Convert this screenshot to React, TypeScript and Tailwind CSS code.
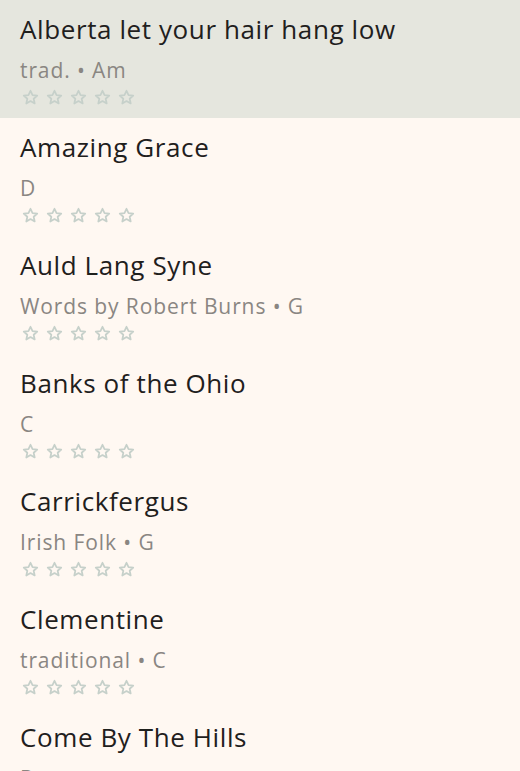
const songs = [
  { title: "Alberta let your hair hang low", meta: ["trad.", "Am"] },
  { title: "Amazing Grace", meta: ["D"] },
  { title: "Auld Lang Syne", meta: ["Words by Robert Burns", "G"] },
  { title: "Banks of the Ohio", meta: ["C"] },
  { title: "Carrickfergus", meta: ["Irish Folk", "G"] },
  { title: "Clementine", meta: ["traditional", "C"] },
  { title: "Come By The Hills", meta: ["D"] },
];

function StarOutline() {
  return (
    <svg viewBox="0 0 24 24" className="h-[17px] w-[17px]" fill="none">
      <polygon
        points="12,2.5 14.9,8.6 21.5,9.3 16.5,13.8 17.9,20.4 12,17 6.1,20.4 7.5,13.8 2.5,9.3 9.1,8.6"
        stroke="#c6d0ca"
        strokeWidth="2.5"
        strokeLinejoin="round"
      />
    </svg>
  );
}

function SongRow({ title, meta, selected }: { title: string; meta: string[]; selected?: boolean }) {
  return (
    <div className={`px-5 pt-[13px] pb-[12px] ${selected ? "bg-[#e5e6de]" : ""}`}>
      <div className="text-[26px] leading-[32px] tracking-[0.6px] text-[#1f201d]">{title}</div>
      <div className="mt-[11px] text-[21px] leading-[28px] tracking-[0.9px] text-[#8a8682]">
        {meta.join(" • ")}
      </div>
      <div className="mt-[5px] flex gap-[7px] pl-[2px]">
        <StarOutline />
        <StarOutline />
        <StarOutline />
        <StarOutline />
        <StarOutline />
      </div>
    </div>
  );
}

export default function App() {
  return (
    <div
      className="h-screen overflow-hidden bg-[#fff8f2]"
      style={{ fontFamily: "'Open Sans', Lato, sans-serif" }}
    >
      {songs.map((s, i) => (
        <SongRow key={s.title} title={s.title} meta={s.meta} selected={i === 0} />
      ))}
    </div>
  );
}
